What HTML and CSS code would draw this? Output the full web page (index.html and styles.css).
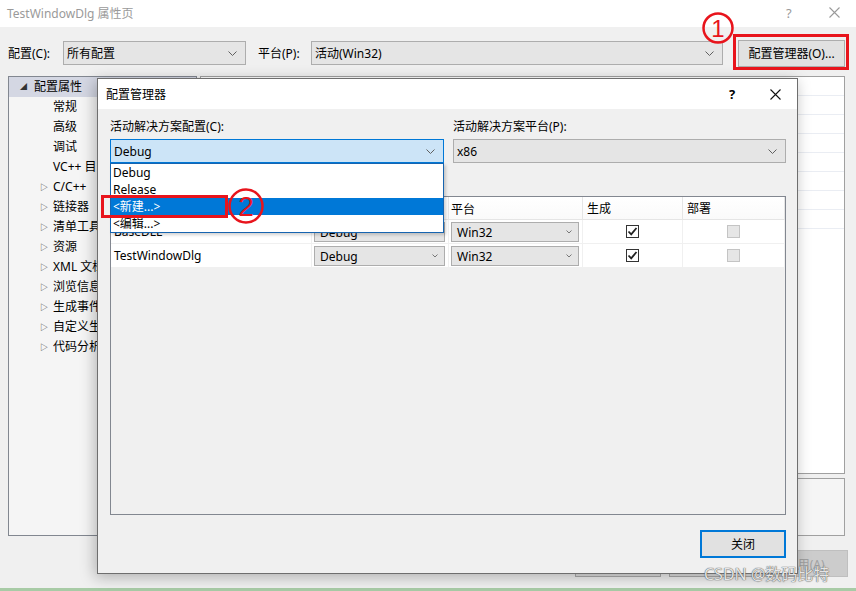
FILE: index.html
```
<!DOCTYPE html>
<html lang="zh-CN">
<head>
<meta charset="UTF-8">
<title>TestWindowDlg 属性页</title>
<link rel="stylesheet" href="styles.css">
</head>
<body>
<div class="screen">

<!-- 属性页主窗口 -->
<div class="window">
    <div class="titlebar">
        <span class="title">TestWindowDlg 属性页</span>
        <span class="tb-help">?</span>
        <span class="tb-close"><svg width="11" height="11" viewBox="0 0 11 11"><path d="M0.5 0.5L10.5 10.5M10.5 0.5L0.5 10.5" stroke="#9a9a9a" stroke-width="1.1"/></svg></span>
    </div>

    <div class="config-row">
        <span class="lbl lbl-cfg">配置(C):</span>
        <div class="combo combo-cfg"><span>所有配置</span><svg class="chev" width="9" height="5" viewBox="0 0 9 5"><path d="M0.5 0.5L4.5 4.5L8.5 0.5" fill="none" stroke="#606060"/></svg></div>
        <span class="lbl lbl-plat">平台(P):</span>
        <div class="combo combo-plat"><span>活动(Win32)</span><svg class="chev" width="9" height="5" viewBox="0 0 9 5"><path d="M0.5 0.5L4.5 4.5L8.5 0.5" fill="none" stroke="#606060"/></svg></div>
        <button class="btn btn-mgr">配置管理器(O)...</button>
    </div>

    <div class="main">
        <div class="tree">
            <div class="node root selected"><span class="arrow open">◢</span>配置属性</div>
            <div class="node leaf">常规</div>
            <div class="node leaf">高级</div>
            <div class="node leaf">调试</div>
            <div class="node leaf">VC++ 目录</div>
            <div class="node"><span class="arrow">▷</span>C/C++</div>
            <div class="node"><span class="arrow">▷</span>链接器</div>
            <div class="node"><span class="arrow">▷</span>清单工具</div>
            <div class="node"><span class="arrow">▷</span>资源</div>
            <div class="node"><span class="arrow">▷</span>XML 文档生成器</div>
            <div class="node"><span class="arrow">▷</span>浏览信息</div>
            <div class="node"><span class="arrow">▷</span>生成事件</div>
            <div class="node"><span class="arrow">▷</span>自定义生成步骤</div>
            <div class="node"><span class="arrow">▷</span>代码分析</div>
        </div>
        <div class="props">
            <div class="grid">
                <div class="grow-row"></div><div class="grow-row"></div><div class="grow-row"></div><div class="grow-row"></div>
                <div class="grow-row"></div><div class="grow-row"></div><div class="grow-row"></div><div class="grow-row"></div>
            </div>
            <div class="desc"></div>
        </div>
    </div>

    <div class="footer">
        <button class="btn">确定</button>
        <button class="btn">取消</button>
        <button class="btn disabled">应用(A)</button>
    </div>
</div>
<div class="taskbar-line"></div>

<!-- 配置管理器对话框 -->
<div class="dialog">
    <div class="dlg-title">
        <span class="title">配置管理器</span>
        <span class="dlg-help">?</span>
        <span class="dlg-close"><svg width="11" height="11" viewBox="0 0 11 11"><path d="M0.5 0.5L10.5 10.5M10.5 0.5L0.5 10.5" stroke="#111" stroke-width="1.1"/></svg></span>
    </div>
    <div class="dlg-body">
        <div class="pickers">
            <div class="picker">
                <div class="plabel">活动解决方案配置(C):</div>
                <div class="combo combo-focus"><span>Debug</span><svg class="chev" width="9" height="5" viewBox="0 0 9 5"><path d="M0.5 0.5L4.5 4.5L8.5 0.5" fill="none" stroke="#606060"/></svg></div>
            </div>
            <div class="picker">
                <div class="plabel">活动解决方案平台(P):</div>
                <div class="combo"><span>x86</span><svg class="chev" width="9" height="5" viewBox="0 0 9 5"><path d="M0.5 0.5L4.5 4.5L8.5 0.5" fill="none" stroke="#606060"/></svg></div>
            </div>
        </div>

        <div class="ptable">
            <div class="prow head">
                <div class="cell">项目</div>
                <div class="cell">配置</div>
                <div class="cell">平台</div>
                <div class="cell">生成</div>
                <div class="cell">部署</div>
            </div>
            <div class="prow">
                <div class="cell">BaseDLL</div>
                <div class="cell"><div class="mini-combo"><span>Debug</span><svg width="6" height="4" viewBox="0 0 6 4"><path d="M0.5 0.5L3 3L5.5 0.5" fill="none" stroke="#777"/></svg></div></div>
                <div class="cell"><div class="mini-combo"><span>Win32</span><svg width="6" height="4" viewBox="0 0 6 4"><path d="M0.5 0.5L3 3L5.5 0.5" fill="none" stroke="#777"/></svg></div></div>
                <div class="cell center"><span class="check on"><svg width="11" height="11" viewBox="0 0 11 11"><path d="M1.5 5.5L4.2 8.3L9.5 2" fill="none" stroke="#222" stroke-width="1.8"/></svg></span></div>
                <div class="cell center"><span class="check off"></span></div>
            </div>
            <div class="prow">
                <div class="cell">TestWindowDlg</div>
                <div class="cell"><div class="mini-combo"><span>Debug</span><svg width="6" height="4" viewBox="0 0 6 4"><path d="M0.5 0.5L3 3L5.5 0.5" fill="none" stroke="#777"/></svg></div></div>
                <div class="cell"><div class="mini-combo"><span>Win32</span><svg width="6" height="4" viewBox="0 0 6 4"><path d="M0.5 0.5L3 3L5.5 0.5" fill="none" stroke="#777"/></svg></div></div>
                <div class="cell center"><span class="check on"><svg width="11" height="11" viewBox="0 0 11 11"><path d="M1.5 5.5L4.2 8.3L9.5 2" fill="none" stroke="#222" stroke-width="1.8"/></svg></span></div>
                <div class="cell center"><span class="check off"></span></div>
            </div>
        </div>

        <div class="dlg-footer">
            <button class="btn btn-default">关闭</button>
        </div>
    </div>
</div>

<!-- 展开的下拉列表 -->
<div class="droplist">
    <div class="ditem">Debug</div>
    <div class="ditem">Release</div>
    <div class="ditem hot">&lt;新建...&gt;</div>
    <div class="ditem">&lt;编辑...&gt;</div>
</div>

<!-- 标注 -->
<div class="mark-box box-one"></div>
<svg class="mark-circle circle-one" width="34" height="34" viewBox="0 0 34 34"><circle cx="17" cy="17" r="14.5" fill="none" stroke="#e8141c" stroke-width="2.5"/><text x="17" y="26" text-anchor="middle" font-size="24" fill="#e8141c">1</text></svg>
<div class="mark-box box-two"></div>
<svg class="mark-circle circle-two" width="38" height="38" viewBox="0 0 38 38"><circle cx="19" cy="19" r="16.5" fill="none" stroke="#e8141c" stroke-width="2.5"/><text x="19" y="29" text-anchor="middle" font-size="28" fill="#e8141c">2</text></svg>

<div class="watermark">CSDN @数码比特</div>
</div>
</body>
</html>
```

FILE: styles.css
```
* {
    box-sizing: border-box;
}

body {
    margin: 0;
    padding: 0;
    font-family: "Noto Sans", "Noto Sans CJK SC", sans-serif;
    font-size: 12px;
    color: #000;
    background: #f0f0f0;
    overflow: hidden;
}

.screen {
    position: relative;
    width: 856px;
    height: 591px;
}

/* ---------- main window ---------- */

.window {
    height: 588px;
    background: #f0f0f0;
    display: flex;
    flex-direction: column;
}

.titlebar {
    height: 27px;
    background: #fff;
    display: flex;
    align-items: center;
    padding: 0 0 2px 7px;
    color: #9a9a9a;
}

.titlebar .title {
    flex: 1;
}

.tb-help {
    font-size: 13px;
    width: 43px;
}

.tb-close {
    width: 27px;
    display: flex;
}

.config-row {
    display: flex;
    align-items: center;
    height: 26px;
    margin-top: 13px;
    padding: 0 11px 0 8px;
}

.lbl-cfg { width: 55px; }
.lbl-plat { width: 53px; margin-left: 12px; }

.combo {
    height: 24px;
    background: #e5e5e5;
    border: 1px solid #adadad;
    display: flex;
    align-items: center;
    padding: 0 8px 0 3px;
}

.combo span {
    flex: 1;
}

.combo-cfg { width: 183px; }
.combo-plat { width: 412px; }

.combo-focus {
    background: #cce4f7;
    border-color: #0078d7;
}

.btn {
    font: inherit;
    color: #000;
    height: 27px;
    width: 86px;
    background: #e1e1e1;
    border: 1px solid #adadad;
    padding: 0;
}

.btn-mgr {
    width: 107px;
    margin-left: auto;
}

.btn.disabled {
    background: #cccccc;
    border-color: #bfbfbf;
    color: #a0a0a0;
}

.main {
    display: flex;
    margin-top: 10px;
    padding: 0 11px 0 8px;
    gap: 3px;
    height: 460px;
}

.tree {
    width: 189px;
    background: #f5f5f5;
    border: 1px solid #828790;
    overflow: hidden;
    white-space: nowrap;
}

.node {
    height: 20px;
    line-height: 20px;
    padding-left: 31px;
    position: relative;
}

.node.root { padding-left: 11px; }
.node.leaf { padding-left: 44px; }

.node.selected {
    background: #d4d7e3;
}

.arrow {
    display: inline-block;
    width: 13px;
    font-size: 8px;
    color: #333;
    vertical-align: top;
}

.arrow.open {
    font-size: 7px;
    width: 14px;
}

.props {
    flex: 1;
    display: flex;
    flex-direction: column;
    gap: 4px;
}

.grid {
    height: 398px;
    background: #fff;
    border: 1px solid #a0a0a0;
}

.grow-row {
    height: 19px;
    border-bottom: 1px solid #eaedf3;
}

.desc {
    flex: 1;
    background: #f5f5f5;
    border: 1px solid #a0a0a0;
}

.footer {
    display: flex;
    margin-top: 14px;
    padding: 0 8px 0 575px;
    gap: 8px;
}

.taskbar-line {
    height: 3px;
    background: #a8cba6;
}

/* ---------- configuration manager dialog ---------- */

.dialog {
    position: absolute;
    left: 97px;
    top: 78px;
    width: 701px;
    height: 496px;
    background: #f0f0f0;
    border: 1px solid #6e6e6e;
    box-shadow: -2px 3px 14px rgba(0, 0, 0, 0.28);
    display: flex;
    flex-direction: column;
}

.dlg-title {
    height: 30px;
    background: #fff;
    display: flex;
    align-items: center;
    padding-left: 8px;
}

.dlg-title .title {
    flex: 1;
}

.dlg-help {
    font-weight: bold;
    font-size: 13px;
    width: 41px;
}

.dlg-close {
    width: 27px;
    display: flex;
}

.dlg-body {
    flex: 1;
    padding: 10px 11px 15px 12px;
    display: flex;
    flex-direction: column;
}

.pickers {
    display: grid;
    grid-template-columns: 334px 333px;
    gap: 9px;
}

.plabel {
    height: 16px;
    line-height: 16px;
    margin-bottom: 4px;
}

.ptable {
    margin-top: 33px;
    height: 319px;
    border: 1px solid #828790;
    width: 676px;
}

.prow {
    display: grid;
    grid-template-columns: 201px 137px 134px 100px 102px;
    height: 24px;
    background: #fff;
    border-bottom: 1px solid #f0f0f0;
}

.prow.head {
    height: 23px;
    border-bottom-color: #e5e5e5;
    background: linear-gradient(#fff, #fafafa);
}

.cell {
    border-right: 1px solid #f0f0f0;
    padding: 0 3px;
    display: flex;
    align-items: center;
}

.prow.head .cell {
    padding-left: 4px;
    border-right-color: #e5e5e5;
}

.prow .cell:nth-child(2),
.prow .cell:nth-child(3) {
    padding: 2px 3px 1px 2px;
}

.cell.center {
    justify-content: center;
}

.mini-combo {
    width: 100%;
    height: 20px;
    background: #e5e5e5;
    border: 1px solid #adadad;
    display: flex;
    align-items: center;
    padding: 0 6px 0 5px;
}

.mini-combo span {
    flex: 1;
}

.check {
    width: 13px;
    height: 13px;
    border: 1px solid #333;
    background: #fff;
    display: flex;
    align-items: center;
    justify-content: center;
}

.check.off {
    border-color: #c4c4c4;
    background: #e6e6e6;
}

.dlg-footer {
    margin-top: auto;
    display: flex;
    justify-content: flex-end;
}

.btn-default {
    height: 28px;
    border: 2px solid #0078d7;
}

/* ---------- open dropdown ---------- */

.droplist {
    position: absolute;
    left: 110px;
    top: 163px;
    width: 334px;
    height: 70px;
    background: #fff;
    border: 1px solid #1664b0;
    box-shadow: 2px 2px 3px rgba(0, 0, 0, 0.18);
}

.ditem {
    height: 17px;
    line-height: 17px;
    padding-left: 2px;
}

.ditem.hot {
    background: #0078d7;
    color: #fff;
}

/* ---------- annotations ---------- */

.mark-box {
    position: absolute;
    border: 3px solid #e8141c;
}

.box-one { left: 733px; top: 34px; width: 116px; height: 36px; }
.box-two { left: 101px; top: 195px; width: 127px; height: 23px; }

.mark-circle {
    position: absolute;
    font-family: "Liberation Sans", sans-serif;
}

.circle-one { left: 701px; top: 11px; }
.circle-two { left: 227px; top: 187px; }

.watermark {
    position: absolute;
    left: 704px;
    top: 561px;
    font-size: 16px;
    color: rgba(255, 255, 255, 0.85);
    text-shadow: 0 0 1px #555, 0 0 1px #555;
    white-space: nowrap;
}
```
